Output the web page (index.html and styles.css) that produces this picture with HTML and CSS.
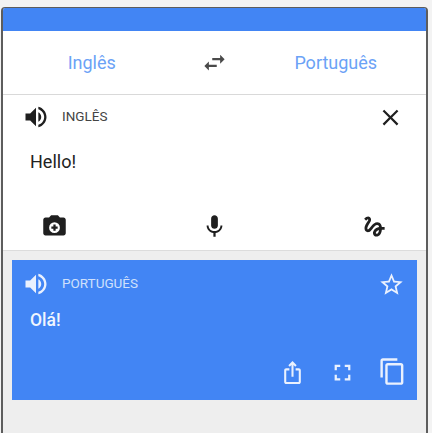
FILE: index.html
```html
<!DOCTYPE html>
<html lang="pt">
<head>
<meta charset="utf-8">
<title>Tradutor</title>
<link rel="stylesheet" href="styles.css">
</head>
<body>
<div class="phone">
  <div class="appbar"></div>
  <div class="langs">
    <div class="lang">Inglês</div>
    <svg class="swap" viewBox="0 0 24 24"><path d="M6.99 11L3 15l3.99 4v-3H14v-2H6.99v-3zM21 9l-3.99-4v3H10v2h7.01v3L21 9z"/></svg>
    <div class="lang target">Português</div>
  </div>
  <section class="input">
    <div class="head">
      <svg class="ic speaker" viewBox="0 0 24 24"><path d="M3 9v6h4l5 5V4L7 9H3zm13.5 3c0-1.77-1.02-3.29-2.5-4.03v8.05c1.48-.73 2.5-2.25 2.5-4.02zM14 3.23v2.06c2.89.86 5 3.54 5 6.71s-2.11 5.85-5 6.71v2.06c4.01-.91 7-4.49 7-8.77s-2.99-7.86-7-8.77z"/></svg>
      <span class="label">INGLÊS</span>
      <svg class="ic end" viewBox="0 0 24 24"><path d="M19 6.41L17.59 5 12 10.59 6.41 5 5 6.41 10.59 12 5 17.59 6.41 19 12 13.41 17.59 19 19 17.59 13.41 12z"/></svg>
    </div>
    <div class="text">Hello!</div>
    <div class="tools">
      <svg class="ic" viewBox="0 0 24 24"><path fill-rule="evenodd" d="M9 2L7.17 4H4C2.9 4 2 4.9 2 6v12c0 1.1.9 2 2 2h16c1.1 0 2-.9 2-2V6c0-1.1-.9-2-2-2h-3.17L15 2H9zm3 6.2a4.800 4.800 0 1 1 0 9.600 4.800 4.800 0 0 1 0-9.600zM11 10.200v1.800H9.200v2H11v1.800h2V14h1.800v-2H13v-1.800h-2z"/></svg>
      <svg class="ic" viewBox="0 0 24 24"><path d="M12 14c1.660 0 3-1.340 3-3V5c0-1.660-1.340-3-3-3S9 3.340 9 5v6c0 1.660 1.340 3 3 3zm5.300-3c0 3-2.540 5.100-5.300 5.100S6.700 14 6.700 11H5c0 3.410 2.720 6.230 6 6.720V21h2v-3.280c3.280-.48 6-3.300 6-6.720h-1.700z"/></svg>
      <svg class="ic" viewBox="0 0 24 24"><path d="M4.59 6.890c.7-.71 1.400-1.350 1.710-1.220.5.2 0 1.030-.3 1.520-.25.42-2.860 3.890-2.860 6.310 0 1.280.48 2.340 1.340 2.980.75.56 1.740.73 2.640.46 1.070-.31 1.950-1.400 3.060-2.770 1.210-1.490 2.830-3.440 4.080-3.440 1.630 0 1.650 1.010 1.760 1.790-3.780.64-5.380 3.670-5.380 5.370 0 1.700 1.440 3.090 3.210 3.090 1.630 0 4.290-1.330 4.690-6.100H21v-2.500h-2.470c-.15-1.650-1.090-4.200-4.030-4.200-2.250 0-4.180 1.910-4.940 2.840-.58.73-2.060 2.480-2.290 2.720-.25.3-.68.84-1.110.84-.45 0-.72-.83-.36-1.920.35-1.090 1.400-2.860 1.850-3.520.78-1.140 1.300-1.920 1.300-3.280C8.950 3.690 7.310 3 6.440 3 5.120 3 3.970 4 3.720 4.250c-.36.36-.66.66-.88.93l1.750 1.710zm9.290 11.660c-.31 0-.74-.26-.74-.72 0-.6.73-2.200 2.870-2.760-.3 2.690-1.430 3.480-2.130 3.480z"/></svg>
    </div>
  </section>
  <div class="result-wrap">
    <section class="result">
      <div class="head">
        <svg class="ic speaker" viewBox="0 0 24 24"><path d="M3 9v6h4l5 5V4L7 9H3zm13.500 3c0-1.770-1.020-3.290-2.500-4.030v8.050c1.480-.73 2.500-2.250 2.500-4.020zM14 3.230v2.060c2.890.86 5 3.540 5 6.710s-2.110 5.850-5 6.710v2.060c4.010-.91 7-4.490 7-8.770s-2.990-7.860-7-8.770z"/></svg>
        <span class="label">PORTUGUÊS</span>
        <svg class="ic end" viewBox="0 0 24 24"><path d="M22 9.240l-7.190-.62L12 2 9.190 8.630 2 9.240l5.460 4.730L5.820 21 12 17.270 18.180 21l-1.630-7.030L22 9.240zM12 15.400l-3.760 2.270 1-4.280-3.320-2.880 4.380-.38L12 6.100l1.710 4.040 4.380.38-3.320 2.880 1 4.280L12 15.400z"/></svg>
      </div>
      <div class="text translated">Olá!</div>
      <div class="actions">
        <span class="action"><svg class="ic share" viewBox="0 0 24 24"><path d="M16 5l-1.420 1.420-1.590-1.590V16h-1.980V4.830L9.420 6.420 8 5l4-4 4 4zm4 5v11c0 1.100-.9 2-2 2H6c-1.110 0-2-.9-2-2V10c0-1.110.89-2 2-2h3v2H6v11h12V10h-3V8h3c1.100 0 2 .89 2 2z"/></svg></span>
        <span class="action"><svg class="ic" viewBox="0 0 24 24"><path d="M7 14H5v5h5v-2H7v-3zm-2-4h2V7h3V5H5v5zm12 7h-3v2h5v-5h-2v3zM14 5v2h3v3h2V5h-5z"/></svg></span>
        <span class="action"><svg class="ic copy" viewBox="0 0 24 24"><path d="M16 1H4c-1.100 0-2 .9-2 2v14h2V3h12V1zm3 4H8c-1.100 0-2 .9-2 2v14c0 1.100.9 2 2 2h11c1.100 0 2-.9 2-2V7c0-1.100-.9-2-2-2zm0 16H8V7h11v14z"/></svg></span>
      </div>
    </section>
  </div>
</div>
</body>
</html>
```

FILE: styles.css
```css
* { box-sizing: border-box; }
html, body { height: 100%; }
body {
  margin: 0;
  padding: 7px 4px 0 1px;
  background: #f3f3f3;
  font-family: Roboto, "Liberation Sans", sans-serif;
  overflow: hidden;
}
.phone {
  height: 100%;
  border: 2px solid #5d5d5d;
  border-top-width: 1px;
  border-bottom: 0;
  border-radius: 4px 4px 0 0;
  background: #eeeeee;
  display: flex;
  flex-direction: column;
  overflow: hidden;
}
.appbar { height: 23px; background: #4285f4; flex: none; }
.langs {
  height: 64px;
  flex: none;
  background: #fff;
  border-bottom: 1px solid #d9d9d9;
  display: grid;
  grid-template-columns: 1fr 68px 1fr;
  align-items: center;
  justify-items: center;
}
.lang {
  text-align: center;
  font-size: 18px;
  color: #6ba2f6;
  margin-bottom: 1px;
}
.target { margin-right: 3px; }
.swap { width: 27px; height: 27px; fill: #4a4a4a; margin-bottom: 1px; }
.input {
  height: 156px;
  flex: none;
  background: #fff;
  border-bottom: 1px solid #dcdcdc;
  padding: 9px 21px 0 21px;
  display: flex;
  flex-direction: column;
}
.head { display: flex; align-items: center; height: 26px; }
.ic { width: 27px; height: 27px; fill: currentColor; flex: none; }
.input .ic { color: #1f1f1f; }
.speaker { width: 28px; height: 28px; margin-left: -2px; }
.label { font-size: 13.5px; margin-left: 12px; flex: 1; margin-bottom: 3px; }
.input .label { color: #444; }
.end { margin-right: -1px; }
.input .end { margin-right: 1px; }
.text { font-size: 18px; color: #222; padding: 21px 0 0 6px; }
.input .text { height: 79px; }
.tools {
  display: flex;
  justify-content: space-between;
  align-items: center;
  padding: 4px 17px 0 17px;
}
.result-wrap { padding: 9px 9px 0 9px; }
.result {
  height: 140px;
  background: #4285f4;
  padding: 11px 13px 0 12px;
  color: #eaf1fe;
  display: flex;
  flex-direction: column;
}
.result .label { color: #cfe0fc; }
.translated { color: #f0f5fe; font-weight: 500; font-size: 17.5px; padding: 13px 0 0 6px; height: 59px; }
.actions {
  display: flex;
  justify-content: flex-end;
  align-items: center;
  margin: 3px -13px 0 0;
}
.action { width: 50px; display: flex; justify-content: center; align-items: center; }
.share { width: 25px; height: 25px; }
.copy { width: 29px; height: 29px; margin-top: -2px; }
```
